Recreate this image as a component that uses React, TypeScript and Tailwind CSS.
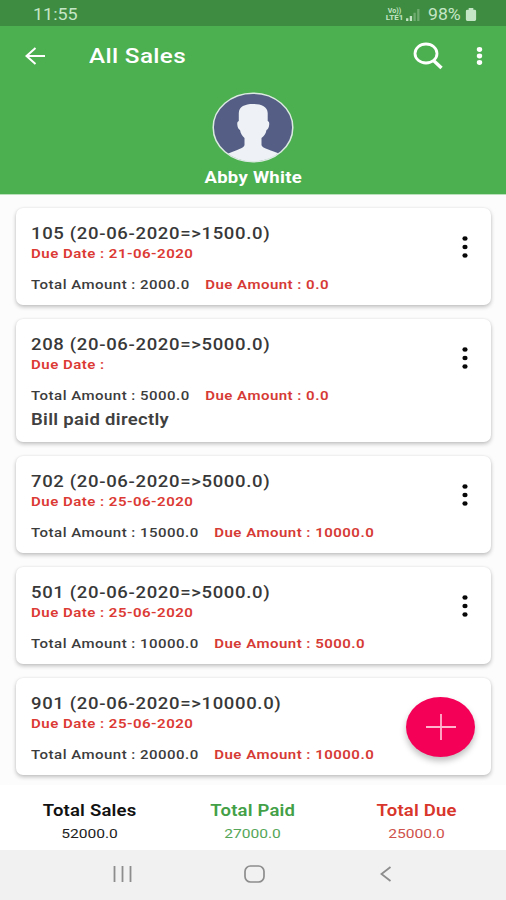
type Sale = {
  id: number;
  paid: string;
  dueDate?: string;
  total: string;
  due: string;
  note?: string;
  menu: boolean;
};

const SALES: Sale[] = [
  { id: 105, paid: '1500.0', dueDate: '21-06-2020', total: '2000.0', due: '0.0', menu: true },
  { id: 208, paid: '5000.0', total: '5000.0', due: '0.0', note: 'Bill paid directly', menu: true },
  { id: 702, paid: '5000.0', dueDate: '25-06-2020', total: '15000.0', due: '10000.0', menu: true },
  { id: 501, paid: '5000.0', dueDate: '25-06-2020', total: '10000.0', due: '5000.0', menu: true },
  { id: 901, paid: '10000.0', dueDate: '25-06-2020', total: '20000.0', due: '10000.0', menu: false },
];

const TOTALS = [
  { label: 'Total Sales', value: '52000.0', color: 'text-[#111111]', valueColor: 'text-[#222222]' },
  { label: 'Total Paid', value: '27000.0', color: 'text-[#43a047]', valueColor: 'text-[#55a659]' },
  { label: 'Total Due', value: '25000.0', color: 'text-[#d8352b]', valueColor: 'text-[#cf524c]' },
];

function StatusBar() {
  return (
    <div className="flex h-[26px] items-center bg-[#3e8c41] pl-[33px] pr-[29px] text-[#c5e6c6]">
      <span className="mt-[3px] origin-left scale-x-[1.12] text-[16px] leading-none">11:55</span>
      <div className="mt-[3px] ml-auto flex items-center">
        <div className="flex w-[19px] flex-col items-center text-[7px] leading-[7px] font-bold">
          <span>Vo))</span>
          <span className="scale-x-[1.15]">LTE1</span>
        </div>
        <svg className="ml-[2px] h-[12px] w-[14px]" viewBox="0 0 15 13" fill="currentColor">
          <path d="M0 10h2.500v3H0zM4 7.500h2.500V13H4z" />
          <path d="M8 4h2.500v9H8zM12 0h2.500v13H12z" opacity=".35" />
        </svg>
        <span className="ml-[8px] w-[33px] origin-left scale-x-[1.1] text-[16px] leading-none">98%</span>
        <svg className="ml-[4px] h-[13px] w-[12px]" viewBox="0 0 12 14" fill="currentColor">
          <path d="M3.500 0h5v2H10a1.500 1.500 0 0 1 1.500 1.500v9A1.500 1.500 0 0 1 10 14H2A1.500 1.500 0 0 1 .5 12.500v-9A1.500 1.500 0 0 1 2 2h1.500z" />
        </svg>
      </div>
    </div>
  );
}

function Header() {
  return (
    <header className="flex h-[168px] flex-col bg-[#4caf50] text-white">
      <div className="flex h-[60px] items-center pl-[25px] pr-[23px]">
        <svg className="h-[18px] w-[21px]" viewBox="0 0 21 18" fill="none" stroke="currentColor" strokeWidth="2">
          <path d="M20 9H2M10.500 1 1.500 9l9 8" />
        </svg>
        <h1 className="ml-[43px] origin-left scale-x-[1.155] text-[21px] leading-none font-medium tracking-[0.3px]">
          All Sales
        </h1>
        <svg className="ml-auto h-[28px] w-[31px]" viewBox="0 0 31 28" fill="none" stroke="currentColor">
          <ellipse cx="13" cy="11.500" rx="11" ry="9.500" strokeWidth="2.800" />
          <path d="m20.500 18.500 8 7.500" strokeWidth="3.400" />
        </svg>
        <svg className="ml-[32px] h-[20px] w-[7px]" viewBox="0 0 7 20" fill="currentColor">
          <ellipse cx="3.500" cy="3.500" rx="2.700" ry="2.400" />
          <ellipse cx="3.500" cy="10" rx="2.700" ry="2.400" />
          <ellipse cx="3.500" cy="16.500" rx="2.700" ry="2.400" />
        </svg>
      </div>
      <div className="flex flex-col items-center pt-[6px]">
        <svg className="h-[71px] w-[82px]" viewBox="0 0 82 71">
          <defs>
            <clipPath id="avatar">
              <ellipse cx="41" cy="35.500" rx="39.500" ry="34" />
            </clipPath>
          </defs>
          <ellipse cx="41" cy="35.500" rx="39.800" ry="34.300" fill="#555f86" />
          <path
            clipPath="url(#avatar)"
            fill="#eef2f6"
            d="M41 12c8 0 14.500 2.500 14.700 9V29c1.800.5 1.800 3 1.200 5.500-.5 2-1.300 3-2.400 3.500-.7 4-2.500 6-5 8v7c0 3 9.500 5 21 10V72H13v-9c11-5 19.500-7 19.500-10v-7c-2-2-3.800-4-4.500-8-1.100-.5-1.900-1.500-2.400-3.500-.6-2.500-.6-5 1.200-5.500v-8C27 14.500 33 12 41 12z"
          />
          <ellipse cx="41" cy="35.500" rx="39.800" ry="34.300" fill="none" stroke="#dcebe2" strokeWidth="1.500" />
        </svg>
        <span className="mt-[6px] scale-x-[1.155] text-[16px] leading-[18px] font-bold tracking-[0.25px]">Abby White</span>
      </div>
    </header>
  );
}

function SaleCard({ sale }: { sale: Sale }) {
  return (
    <div className="flex rounded-[7px] bg-white pt-[16px] pr-[22px] pb-[12px] pl-[15px] shadow-[0_2px_4px_rgba(0,0,0,0.24),0_0_2px_rgba(0,0,0,0.08)]">
      <div className="w-[360px] origin-left scale-x-[1.155] whitespace-nowrap">
        <div className="text-[16px] leading-[20px] font-medium tracking-[0.58px] text-[#383838]">
          {sale.id} (20-06-2020=&gt;{sale.paid})
        </div>
        <div className="text-[13px] leading-[20px] font-semibold tracking-[0.42px] text-[#dc3a34]">
          Due Date : {sale.dueDate}
        </div>
        <div className="mt-[13px] flex gap-[13.5px] text-[13px] leading-[16px] tracking-[0.41px]">
          <span className="font-medium text-[#3c3c3c]">Total Amount : {sale.total}</span>
          <span className="font-semibold text-[#d63a35]">Due Amount : {sale.due}</span>
        </div>
        {sale.note && (
          <div className="mt-[6px] text-[16px] leading-[20px] font-semibold tracking-[0.28px] text-[#404040]">
            {sale.note}
          </div>
        )}
      </div>
      {sale.menu && (
        <svg className="mt-[11px] ml-auto h-[24px] w-[8px]" viewBox="0 0 8 24" fill="#080808">
          <ellipse cx="4" cy="3.500" rx="2.600" ry="2.200" />
          <ellipse cx="4" cy="12" rx="2.600" ry="2.200" />
          <ellipse cx="4" cy="20.500" rx="2.600" ry="2.200" />
        </svg>
      )}
    </div>
  );
}

function AddButton() {
  return (
    <button className="absolute top-[502px] right-[31px] flex h-[60px] w-[69px] items-center justify-center rounded-[50%] bg-[#f50057] shadow-[0_4px_6px_rgba(0,0,0,0.25)]">
      <svg className="h-[28px] w-[30px]" viewBox="0 0 30 28" fill="none" stroke="#ffb3cd" strokeWidth="1.800">
        <path d="M0 14h30M15 1v26" />
      </svg>
    </button>
  );
}

function NavBar() {
  return (
    <nav className="flex h-[50px] items-center bg-[#f1f1f1] pb-[2px] text-[#8d8d8d]">
      <svg className="ml-[113px] h-[16px] w-[19px]" viewBox="0 0 19 16" fill="none" stroke="currentColor" strokeWidth="1.800">
        <path d="M1.500 0v16M9.500 0v16M17.500 0v16" />
      </svg>
      <svg className="ml-[112px] h-[18px] w-[21px]" viewBox="0 0 21 18" fill="none" stroke="currentColor" strokeWidth="1.700">
        <rect x="1" y="1" width="19" height="16" rx="5.500" />
      </svg>
      <svg className="ml-[115px] h-[16px] w-[12px]" viewBox="0 0 12 16" fill="none" stroke="currentColor" strokeWidth="1.800">
        <path d="M10.500 1 1.500 8l9 7" />
      </svg>
    </nav>
  );
}

export default function App() {
  return (
    <div className="flex h-[900px] w-[506px] flex-col overflow-hidden bg-white font-[Roboto,sans-serif]">
      <StatusBar />
      <Header />
      <main className="relative flex h-[591px] flex-col gap-[14px] overflow-hidden border-t border-[#b9e0ba] bg-[#fcfcfc] pt-[13px] pr-[15px] pl-[16px]">
        {SALES.map(sale => (
          <SaleCard key={sale.id} sale={sale} />
        ))}
        <AddButton />
      </main>
      <footer className="flex h-[65px] bg-white px-[8px] pt-[15px]">
        {TOTALS.map(item => (
          <div key={item.label} className="flex flex-1 flex-col items-center">
            <span className={`scale-x-[1.155] text-[16px] leading-[21px] font-semibold tracking-[0.18px] ${item.color}`}>
              {item.label}
            </span>
            <span className={`mt-[3px] scale-x-[1.155] text-[13.5px] leading-[18px] ${item.valueColor}`}>{item.value}</span>
          </div>
        ))}
      </footer>
      <NavBar />
    </div>
  );
}
